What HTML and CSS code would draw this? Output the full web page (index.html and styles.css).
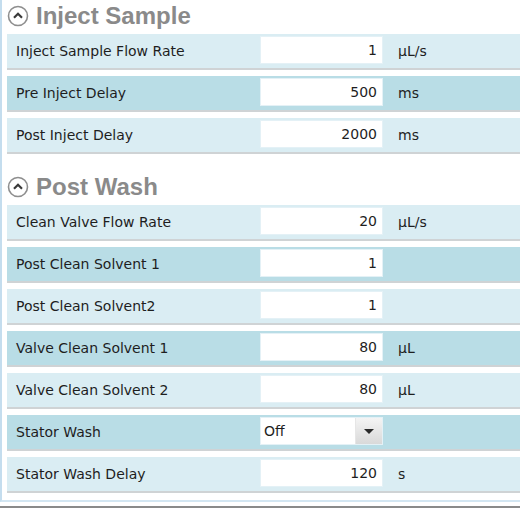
FILE: index.html
```html
<!DOCTYPE html>
<html lang="en">
<head>
    <meta charset="UTF-8">
    <title>Method Settings</title>
    <link rel="stylesheet" href="styles.css">
</head>
<body>
    <div class="panel">
        <div class="section">
            <div class="section-header">
                <span class="toggle">
                    <svg width="22" height="22" viewBox="0 0 22 22">
                        <circle cx="11" cy="11" r="9.5" fill="#fff" stroke="#8e8e8e" stroke-width="1.6"/>
                        <path d="M7 12.8 L11 8.8 L15 12.8" fill="none" stroke="#3a3a3a" stroke-width="2.2"/>
                    </svg>
                </span>
                <h2>Inject Sample</h2>
            </div>
            <div class="row light">
                <span class="label">Inject Sample Flow Rate</span>
                <span class="field">1</span>
                <span class="unit">µL/s</span>
            </div>
            <div class="row dark">
                <span class="label">Pre Inject Delay</span>
                <span class="field">500</span>
                <span class="unit">ms</span>
            </div>
            <div class="row light">
                <span class="label">Post Inject Delay</span>
                <span class="field">2000</span>
                <span class="unit">ms</span>
            </div>
        </div>

        <div class="section second">
            <div class="section-header">
                <span class="toggle">
                    <svg width="22" height="22" viewBox="0 0 22 22">
                        <circle cx="11" cy="11" r="9.5" fill="#fff" stroke="#8e8e8e" stroke-width="1.6"/>
                        <path d="M7 12.8 L11 8.8 L15 12.8" fill="none" stroke="#3a3a3a" stroke-width="2.2"/>
                    </svg>
                </span>
                <h2>Post Wash</h2>
            </div>
            <div class="row light">
                <span class="label">Clean Valve Flow Rate</span>
                <span class="field">20</span>
                <span class="unit">µL/s</span>
            </div>
            <div class="row dark">
                <span class="label">Post Clean Solvent 1</span>
                <span class="field">1</span>
                <span class="unit"></span>
            </div>
            <div class="row light">
                <span class="label">Post Clean Solvent2</span>
                <span class="field">1</span>
                <span class="unit"></span>
            </div>
            <div class="row dark">
                <span class="label">Valve Clean Solvent 1</span>
                <span class="field">80</span>
                <span class="unit">µL</span>
            </div>
            <div class="row light">
                <span class="label">Valve Clean Solvent 2</span>
                <span class="field">80</span>
                <span class="unit">µL</span>
            </div>
            <div class="row dark">
                <span class="label">Stator Wash</span>
                <span class="field select">
                    <span class="select-text">Off</span>
                    <span class="select-button"><span class="arrow"></span></span>
                </span>
                <span class="unit"></span>
            </div>
            <div class="row light">
                <span class="label">Stator Wash Delay</span>
                <span class="field">120</span>
                <span class="unit">s</span>
            </div>
        </div>
    </div>
    <div class="window-edge"></div>
</body>
</html>
```

FILE: styles.css
```css
body {
    margin: 0;
    font-family: "DejaVu Sans", Verdana, sans-serif;
    background: #fff;
    width: 520px;
    overflow: hidden;
}
.panel {
    border-left: 2px solid #c4ddee;
    border-bottom: 2px solid #d3e6f2;
    padding-left: 5px;
    padding-bottom: 1px;
}
.section-header {
    display: flex;
    align-items: center;
    height: 34px;
}
.section.second {
    padding-top: 11px;
}
.toggle {
    display: flex;
    width: 22px;
    height: 22px;
    margin-top: -3px;
}
.section-header h2 {
    margin: -2px 0 0 7px;
    font-family: "Liberation Sans", Arial, sans-serif;
    font-size: 24px;
    font-weight: bold;
    color: #8a8a8a;
    line-height: 1;
}
.row {
    display: flex;
    align-items: center;
    height: 34px;
    border-bottom: 2px solid #cfd3d5;
    margin-bottom: 6px;
    padding-left: 9px;
    font-size: 14px;
    color: #1e1e1e;
}
.row.light {
    background-color: #daedf3;
}
.row.dark {
    background-color: #b9dde6;
}
.label {
    width: 244px;
}
.field {
    box-sizing: border-box;
    width: 123px;
    height: 28px;
    background: #fff;
    border: 1px solid #e4f1f6;
    text-align: right;
    padding-right: 5px;
    line-height: 26px;
    margin-top: -2px;
}
.unit {
    margin-left: 15px;
}
.field.select {
    display: flex;
    padding-right: 0;
    text-align: left;
}
.select-text {
    flex: 1;
    padding-left: 3px;
}
.select-button {
    display: flex;
    align-items: center;
    justify-content: center;
    width: 26px;
    background: linear-gradient(#f4f4f4, #d9d9d9);
    border-left: 1px solid #e6e6e6;
}
.arrow {
    width: 0;
    height: 0;
    border-left: 5px solid transparent;
    border-right: 5px solid transparent;
    border-top: 5px solid #2a2a2a;
}
.window-edge {
    margin-top: 4px;
    height: 2px;
    background: #8a8a8a;
}
```
